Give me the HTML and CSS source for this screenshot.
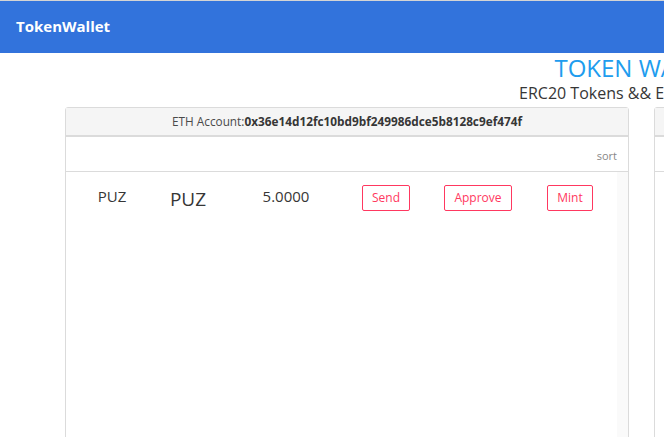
FILE: index.html
```html
<!DOCTYPE html>
<html>
<head>
<meta charset="utf-8">
<link rel="stylesheet" href="styles.css">
</head>
<body>
<nav class="navbar">
  <span class="brand">TokenWallet</span>
</nav>
<div class="page">
  <div class="hero">
    <div class="title">TOKEN WALLET</div>
    <div class="subtitle">ERC20 Tokens &amp;&amp; ERC721 Tokens</div>
  </div>
  <div class="columns">
    <div class="card">
      <div class="card-header">ETH Account:<b>0x36e14d12fc10bd9bf249986dce5b8128c9ef474f</b></div>
      <div class="toolbar"><span class="sort">sort</span></div>
      <div class="card-body">
        <div class="list">
          <div class="token-row">
            <div class="c1">PUZ</div>
            <div class="c2">PUZ</div>
            <div class="c3">5.0000</div>
            <div class="c4"><button class="btn">Send</button></div>
            <div class="c5"><button class="btn">Approve</button></div>
            <div class="c6"><button class="btn">Mint</button></div>
          </div>
        </div>
        <div class="strip"></div>
      </div>
    </div>
    <div class="card">
      <div class="card-header">&nbsp;</div>
      <div class="toolbar"></div>
      <div class="card-body"></div>
    </div>
  </div>
</div>
</body>
</html>
```

FILE: styles.css
```css
html, body {
  margin: 0;
  padding: 0;
  overflow: hidden;
  background: #fff;
}
body {
  font-family: "Open Sans", "Noto Sans", sans-serif;
  color: #363636;
  width: 664px;
  height: 437px;
  border-top: 1px solid #d4d4d4;
  box-sizing: border-box;
}
.navbar {
  height: 52px;
  background: #3273dc;
  display: flex;
  align-items: center;
  padding-left: 16px;
}
.brand {
  color: #fff;
  font-weight: 700;
  font-size: 15px;
  margin-top: -2px;
}
.page {
  width: 1280px;
}
.hero {
  text-align: center;
  padding-left: 2px;
}
.title {
  color: #209cee;
  font-size: 24px;
  line-height: 30px;
  margin-top: 0;
}
.subtitle {
  color: #363636;
  font-size: 16px;
  line-height: 20px;
  padding-left: 6px;
}
.columns {
  display: flex;
  gap: 25px;
  padding-left: 65px;
  margin-top: 4px;
}
.card {
  width: 564px;
  height: 400px;
  box-sizing: border-box;
  border: 1px solid #dbdbdb;
  border-radius: 3px;
  display: flex;
  flex-direction: column;
}
.card-header {
  height: 27px;
  background: #f5f5f5;
  border-bottom: 2px solid #dbdbdb;
  text-align: center;
  font-size: 11.8px;
  line-height: 27px;
  color: #4a4a4a;
}
.card-header b {
  color: #363636;
}
.toolbar {
  height: 34px;
  border-bottom: 1px solid #dbdbdb;
  display: flex;
  justify-content: flex-end;
  align-items: center;
  padding-right: 11px;
}
.sort {
  font-size: 11px;
  color: #888;
  margin-top: 2px;
}
.card-body {
  flex: 1;
  display: flex;
}
.list {
  flex: 1;
}
.strip {
  width: 11px;
  background: #fafafa;
}
.token-row {
  display: flex;
  align-items: center;
  padding-left: 8px;
  height: 52px;
}
.token-row > div {
  text-align: center;
}
.c1 { width: 76px; font-size: 15px; margin-top: -4px; }
.c2 { width: 76px; font-size: 19px; margin-top: 2px; }
.c3 { width: 120px; font-size: 15px; margin-top: -4px; }
.c4 { width: 80px; }
.c5 { width: 104px; }
.c6 { width: 80px; }
.btn {
  font-family: inherit;
  font-size: 12px;
  color: #ff3860;
  background: #fff;
  border: 1px solid #ff3860;
  border-radius: 2px;
  height: 26px;
  padding: 0 9px;
  line-height: 24px;
}
```
